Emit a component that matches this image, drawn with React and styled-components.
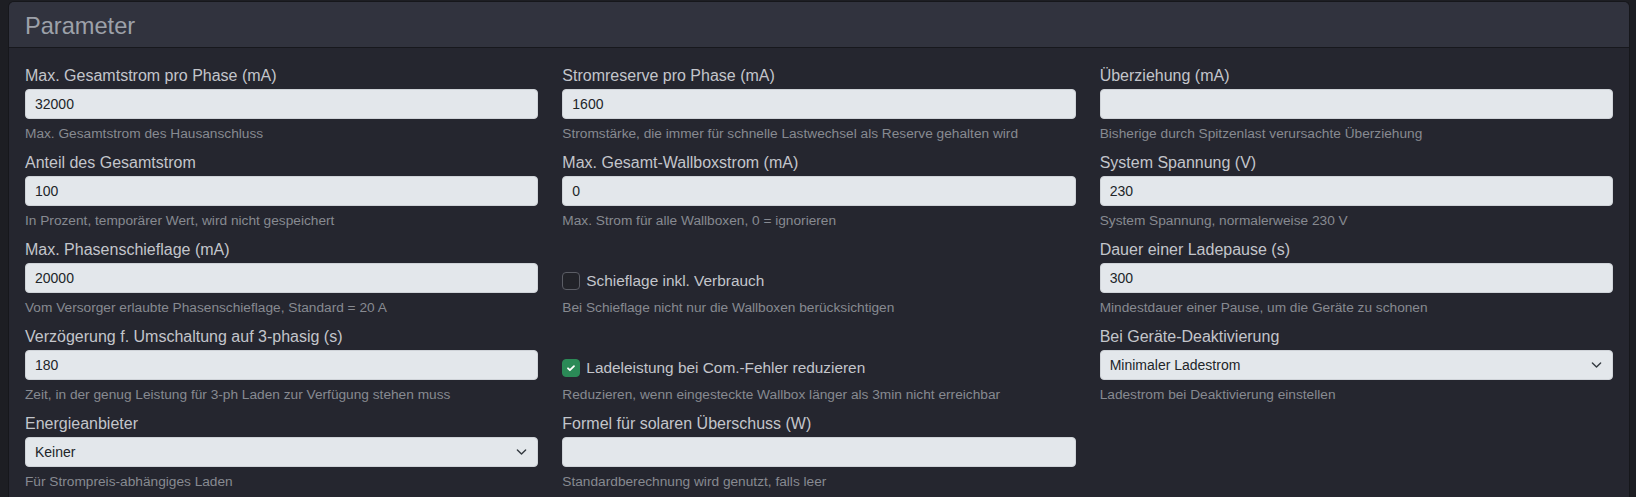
import React from "react";
import styled, { createGlobalStyle } from "styled-components";

const GlobalStyle = createGlobalStyle`
  html, body { margin: 0; padding: 0; background: #1d1e23; }
  body {
    font-family: "Liberation Sans", Arial, sans-serif;
    -webkit-font-smoothing: antialiased;
  }
  * { box-sizing: border-box; }
`;

const Page = styled.div`
  padding: 1px 6px 0 8px;
  height: 497px;
  overflow: hidden;
`;

const Card = styled.section`
  background: #25262f;
  border: 1px solid #16171b;
  border-bottom: none;
  border-radius: 6px 6px 0 0;
  min-height: 520px;
`;

const CardHeader = styled.header`
  background: #31333e;
  border-bottom: 1px solid #17181d;
  border-radius: 5px 5px 0 0;
  padding: 10px 16px 6px 16px;
`;

const Title = styled.h4`
  margin: 0;
  font-size: 23.6px;
  line-height: 28.8px;
  font-weight: 500;
  color: #9da1a9;
`;

const CardBody = styled.div`
  padding: 16px 16px 0 16px;
`;

const Grid = styled.div`
  display: grid;
  grid-template-columns: repeat(3, 1fr);
  column-gap: 24px;
  row-gap: 7px;
`;

const Field = styled.div`
  display: flex;
  flex-direction: column;
  min-width: 0;
  padding-top: ${(p) => (p.$check ? "31px" : "0")};
`;

const Label = styled.label`
  font-size: 16px;
  line-height: 24px;
  color: #c3c5cb;
  margin-bottom: 1px;
`;

const Input = styled.input`
  height: 30px;
  width: 100%;
  background: #e3e7eb;
  border: 1px solid #cfd3d8;
  border-radius: 4px;
  padding: 0 9px;
  font-family: inherit;
  font-size: 14px;
  color: #212529;
  outline: none;
`;

const SelectBox = styled.div`
  position: relative;
  height: 30px;
  background: #e3e7eb;
  border: 1px solid #cfd3d8;
  border-radius: 4px;
  padding: 0 36px 0 9px;
  display: flex;
  align-items: center;
  font-size: 14px;
  color: #212529;
`;

const Chevron = styled.svg`
  position: absolute;
  right: 10px;
  top: 50%;
  transform: translateY(-50%);
  width: 11px;
  height: 11px;
`;

const Help = styled.div`
  margin-top: 4px;
  font-size: 13.7px;
  line-height: 21px;
  color: #878a91;
`;

const CheckRow = styled.label`
  display: flex;
  align-items: center;
  gap: 6px;
  font-size: 15.4px;
  line-height: 24px;
  color: #c3c5cb;
`;

const Box = styled.span`
  width: 18px;
  height: 18px;
  border-radius: 4px;
  flex: 0 0 auto;
  display: flex;
  align-items: center;
  justify-content: center;
  background: ${(p) => (p.$checked ? "#2b8a57" : "#222329")};
  border: 1px solid ${(p) => (p.$checked ? "#2b8a57" : "#5b5d65")};
`;

const Empty = styled.div``;

function TextField({ label, value, help }) {
  return (
    <Field>
      <Label>{label}</Label>
      <Input defaultValue={value} />
      <Help>{help}</Help>
    </Field>
  );
}

function SelectField({ label, value, help }) {
  return (
    <Field>
      <Label>{label}</Label>
      <SelectBox>
        {value}
        <Chevron viewBox="0 0 16 16">
          <path
            d="M2 5l6 6 6-6"
            fill="none"
            stroke="#343a40"
            strokeWidth="2"
            strokeLinecap="round"
            strokeLinejoin="round"
          />
        </Chevron>
      </SelectBox>
      <Help>{help}</Help>
    </Field>
  );
}

function CheckField({ label, checked, help }) {
  return (
    <Field $check>
      <CheckRow>
        <Box $checked={checked}>
          {checked && (
            <svg width="12" height="12" viewBox="0 0 20 20">
              <path
                d="M5 10.5l3.2 3.2L15 7"
                fill="none"
                stroke="#fff"
                strokeWidth="3"
                strokeLinecap="round"
                strokeLinejoin="round"
              />
            </svg>
          )}
        </Box>
        {label}
      </CheckRow>
      <Help>{help}</Help>
    </Field>
  );
}

export default function App() {
  return (
    <>
      <GlobalStyle />
      <Page>
        <Card>
          <CardHeader>
            <Title>Parameter</Title>
          </CardHeader>
          <CardBody>
            <Grid>
              <TextField label="Max. Gesamtstrom pro Phase (mA)" value="32000" help="Max. Gesamtstrom des Hausanschluss" />
              <TextField label="Stromreserve pro Phase (mA)" value="1600" help="Stromstärke, die immer für schnelle Lastwechsel als Reserve gehalten wird" />
              <TextField label="Überziehung (mA)" value="" help="Bisherige durch Spitzenlast verursachte Überziehung" />

              <TextField label="Anteil des Gesamtstrom" value="100" help="In Prozent, temporärer Wert, wird nicht gespeichert" />
              <TextField label="Max. Gesamt-Wallboxstrom (mA)" value="0" help="Max. Strom für alle Wallboxen, 0 = ignorieren" />
              <TextField label="System Spannung (V)" value="230" help="System Spannung, normalerweise 230 V" />

              <TextField label="Max. Phasenschieflage (mA)" value="20000" help="Vom Versorger erlaubte Phasenschieflage, Standard = 20 A" />
              <CheckField label="Schieflage inkl. Verbrauch" checked={false} help="Bei Schieflage nicht nur die Wallboxen berücksichtigen" />
              <TextField label="Dauer einer Ladepause (s)" value="300" help="Mindestdauer einer Pause, um die Geräte zu schonen" />

              <TextField label="Verzögerung f. Umschaltung auf 3-phasig (s)" value="180" help="Zeit, in der genug Leistung für 3-ph Laden zur Verfügung stehen muss" />
              <CheckField label="Ladeleistung bei Com.-Fehler reduzieren" checked help="Reduzieren, wenn eingesteckte Wallbox länger als 3min nicht erreichbar" />
              <SelectField label="Bei Geräte-Deaktivierung" value="Minimaler Ladestrom" help="Ladestrom bei Deaktivierung einstellen" />

              <SelectField label="Energieanbieter" value="Keiner" help="Für Strompreis-abhängiges Laden" />
              <TextField label="Formel für solaren Überschuss (W)" value="" help="Standardberechnung wird genutzt, falls leer" />
              <Empty />
            </Grid>
          </CardBody>
        </Card>
      </Page>
    </>
  );
}
